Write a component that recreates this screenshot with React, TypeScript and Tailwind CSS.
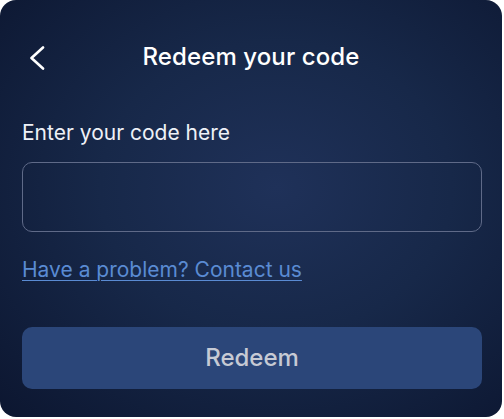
export default function App() {
  return (
    <div className="h-[419px] w-[504px] bg-white font-['Inter',sans-serif]">
      <div className="flex h-[417px] w-[502px] flex-col rounded-2xl bg-[radial-gradient(ellipse_at_55%_45%,#1f3159_0%,#172849_45%,#0c1630_100%)] px-[22px]">
        <header className="relative flex h-[116px] items-center justify-center pb-[2px]">
          <button className="absolute left-[7px] top-[46px] text-white">
            <svg width="16" height="24" viewBox="0 0 16 24" fill="none">
              <path
                d="M14 1.5 L2.5 12 L14 22.5"
                stroke="currentColor"
                strokeWidth="2.6"
                strokeLinecap="round"
                strokeLinejoin="round"
              />
            </svg>
          </button>
          <h1 className="text-[24px] font-medium tracking-[0.1px] text-white">
            Redeem your code
          </h1>
        </header>

        <label className="text-[21px] leading-[34px] text-[#eef1f7]">
          Enter your code here
        </label>
        <input
          type="text"
          className="mt-[12px] h-[70px] w-[460px] rounded-[10px] border border-[#5f6a88] bg-transparent px-4 text-white outline-none"
        />

        <a
          href="#"
          className="mt-[21px] self-start text-[21px] leading-[34px] text-[#5a8bd3] underline decoration-1 underline-offset-[3px]"
        >
          Have a problem? Contact us
        </a>

        <button className="mt-[40px] h-[62px] w-[460px] rounded-[10px] bg-[#2b4679] text-[24px] font-medium text-[#c6cad4]">
          Redeem
        </button>
      </div>
    </div>
  );
}
